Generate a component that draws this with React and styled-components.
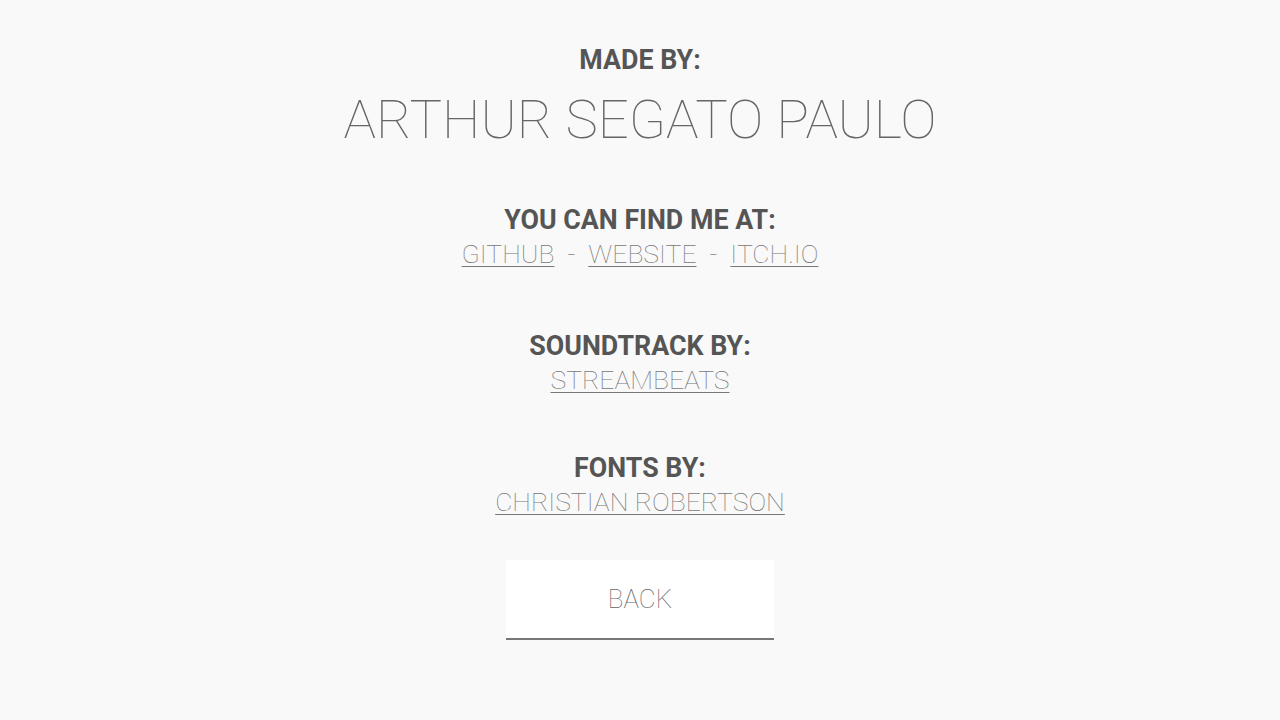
import React from "react";
import styled, { createGlobalStyle } from "styled-components";

const GlobalStyle = createGlobalStyle`
  html, body {
    margin: 0;
    padding: 0;
    background-color: #f9f9f9;
    font-family: Roboto, "Liberation Sans", sans-serif;
    color: #555;
  }
`;

const thin = `"Roboto Thin", Roboto, "Liberation Sans", sans-serif`;

const Page = styled.div`
  display: flex;
  flex-direction: column;
  align-items: center;
  padding-top: 43px;
  min-height: 100vh;
  box-sizing: border-box;
`;

const Section = styled.section`
  display: flex;
  flex-direction: column;
  align-items: center;
  margin-top: ${(props) => props.gap || 0}px;
`;

const Heading = styled.h2`
  margin: 0;
  font-size: 26.8px;
  line-height: 34px;
  font-weight: 700;
  color: #555;
`;

const Name = styled.h1`
  margin: 12px 0 0 0;
  font-family: ${thin};
  font-size: 54.5px;
  line-height: 60px;
  font-weight: 100;
  color: #666;
`;

const Links = styled.div`
  font-family: ${thin};
  font-size: 26.5px;
  line-height: 34px;
  font-weight: 100;
  color: #777;
`;

const Link = styled.a`
  color: #777;
  text-decoration: underline;
  text-decoration-thickness: 1px;
  text-underline-offset: 3px;
  cursor: pointer;
`;

const Separator = styled.span`
  margin: 0 13px;
`;

const BackButton = styled.button`
  margin-top: 41px;
  width: 268px;
  height: 80px;
  background-color: #fff;
  border: none;
  border-bottom: 2px solid #777;
  font-family: ${thin};
  font-size: 26px;
  font-weight: 100;
  color: #666;
  cursor: pointer;
`;

export default function App() {
  return (
    <>
      <GlobalStyle />
      <Page>
        <Section>
          <Heading>MADE BY:</Heading>
          <Name>ARTHUR SEGATO PAULO</Name>
        </Section>
        <Section gap={54}>
          <Heading>YOU CAN FIND ME AT:</Heading>
          <Links>
            <Link>GITHUB</Link>
            <Separator>-</Separator>
            <Link>WEBSITE</Link>
            <Separator>-</Separator>
            <Link>ITCH.IO</Link>
          </Links>
        </Section>
        <Section gap={58}>
          <Heading>SOUNDTRACK BY:</Heading>
          <Links>
            <Link>STREAMBEATS</Link>
          </Links>
        </Section>
        <Section gap={54}>
          <Heading>FONTS BY:</Heading>
          <Links>
            <Link>CHRISTIAN ROBERTSON</Link>
          </Links>
        </Section>
        <BackButton>BACK</BackButton>
      </Page>
    </>
  );
}
